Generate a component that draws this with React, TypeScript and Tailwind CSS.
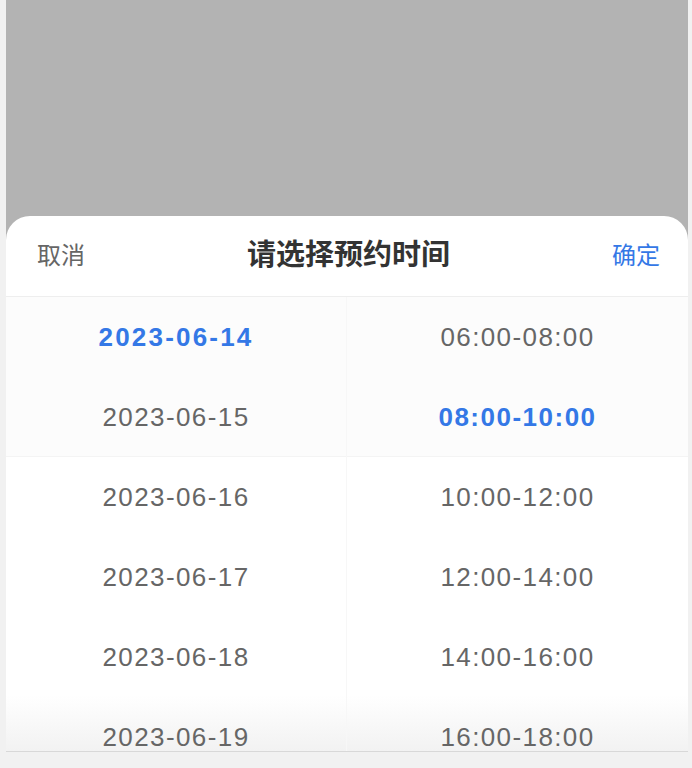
import React from "react"

const dates = ["2023-06-14", "2023-06-15", "2023-06-16", "2023-06-17", "2023-06-18", "2023-06-19"]
const times = ["06:00-08:00", "08:00-10:00", "10:00-12:00", "12:00-14:00", "14:00-16:00", "16:00-18:00"]

const font = { fontFamily: '"Liberation Sans", "Noto Sans CJK SC", sans-serif' }

function Column({
  items,
  active,
  activeClass,
  divider,
}: {
  items: string[]
  active: number
  activeClass: string
  divider?: boolean
}) {
  return (
    <div className={divider ? "flex flex-col border-r border-[#f7f7f7]" : "flex flex-col"}>
      {items.map((item, i) => (
        <div
          key={item}
          className={
            i === active
              ? "h-[80px] shrink-0 flex items-center justify-center text-[26px] font-bold text-[#3478e6] " + activeClass
              : "h-[80px] shrink-0 flex items-center justify-center text-[26px] tracking-[1.4px] text-[#666666]"
          }
        >
          {item}
        </div>
      ))}
    </div>
  )
}

export default function App() {
  return (
    <div className="h-[768px] w-full bg-[#f1f1f1] pl-[6px] pr-[4px] pb-[16px] flex flex-col" style={font}>
      <div className="flex-1 bg-[#b3b3b3] flex flex-col justify-end border-b border-[#d8d8d8]">
        <div className="h-[535px] bg-white rounded-t-[24px] flex flex-col overflow-hidden">
          {/* Header */}
          <div className="h-[81px] shrink-0 flex items-center justify-between pl-[31px] pr-[28px] border-b border-[#eeeeee]">
            <button className="text-[24px] text-[#666666]">取消</button>
            <div className="text-[29px] font-bold text-[#333333]">请选择预约时间</div>
            <button className="text-[24px] text-[#3478e6]">确定</button>
          </div>

          {/* Picker */}
          <div className="relative flex-1 overflow-hidden">
            <div className="absolute left-0 right-0 top-0 h-[160px] bg-[#fcfcfc] border-b border-[#f4f4f4]" />
            <div className="absolute left-0 right-0 bottom-0 h-[56px] bg-gradient-to-b from-white to-[#f2f2f2]" />
            <div className="relative grid grid-cols-2">
              <Column items={dates} active={0} activeClass="tracking-[2.2px]" divider />
              <Column items={times} active={1} activeClass="tracking-[1.5px]" />
            </div>
          </div>
        </div>
      </div>
    </div>
  )
}
